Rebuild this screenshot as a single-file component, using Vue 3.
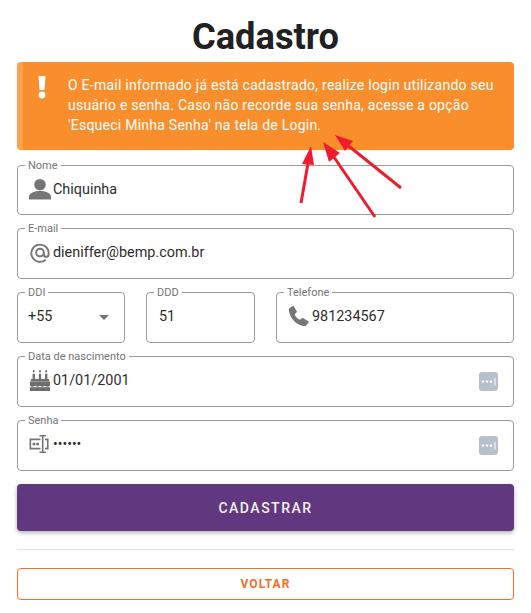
<script setup>
const arrows = [
  { x1: 301, y1: 203, x2: 310, y2: 152, head: '311,146 302,164 314,165' },
  { x1: 375, y1: 217, x2: 327, y2: 147, head: '323,142 329,162 340,153' },
  { x1: 401, y1: 188, x2: 340, y2: 139, head: '335,135 345,151 353,141' }
]
</script>

<template>
  <main class="page">
    <h1 class="title">Cadastro</h1>
    <div class="alert">
      <svg class="alert-icon" width="10" height="24" viewBox="0 0 10 24"><path d="M1.5 1h7l-1 14h-5z" fill="#fff"/><circle cx="5" cy="20" r="3.4" fill="#fff"/></svg>
      <p class="alert-text">O E-mail informado já está cadastrado, realize login utilizando seu usuário e senha. Caso não recorde sua senha, acesse a opção 'Esqueci Minha Senha' na tela de Login.</p>
    </div>

    <form class="form" @submit.prevent>
      <fieldset class="field first">
        <legend>Nome</legend>
        <div class="value">
          <svg class="icon" width="23" height="24" viewBox="0 0 24 24"><circle cx="12.5" cy="7.5" r="6" fill="#767676"/><path d="M1 23v-3c0-4 6-6 11.500-6S24 16 24 20v3z" fill="#767676"/></svg>
          <span>Chiquinha</span>
        </div>
      </fieldset>

      <fieldset class="field">
        <legend>E-mail</legend>
        <div class="value">
          <svg class="icon" width="23" height="23" viewBox="0 0 24 24" fill="none" stroke="#767676" stroke-width="2"><path d="M18.500 19.500a9 9 0 1 1 3-7v1.500a2.500 2.500 0 0 1-5 0V12"/><circle cx="12.500" cy="12" r="4"/></svg>
          <span>dieniffer@bemp.com.br</span>
        </div>
      </fieldset>

      <div class="row">
        <fieldset class="field ddi">
          <legend>DDI</legend>
          <div class="value select">
            <span>+55</span>
            <i class="caret"></i>
          </div>
        </fieldset>
        <fieldset class="field ddd">
          <legend>DDD</legend>
          <div class="value plain"><span>51</span></div>
        </fieldset>
        <fieldset class="field phone">
          <legend>Telefone</legend>
          <div class="value">
            <svg class="icon" width="23" height="24" viewBox="0 0 24 24"><path d="M2 4.500 6.500 1l4 6.500-2.500 3c1 2.500 3 4.500 5.500 5.500l2.800-2.300L23 18l-3.500 4.500C10 23 1.500 13 2 4.500z" fill="#767676"/></svg>
            <span>981234567</span>
          </div>
        </fieldset>
      </div>

      <fieldset class="field">
        <legend>Data de nascimento</legend>
        <div class="value">
          <svg class="icon" width="23" height="24" viewBox="0 0 24 24" fill="#6e6e6e"><path d="M6 1l1.200 2-1.200 1.500-1.200-1.500zM12.500 1l1.200 2-1.200 1.500-1.200-1.500zM19 1l1.200 2-1.200 1.500-1.200-1.500z"/><rect x="4.800" y="5.500" width="2.400" height="6"/><rect x="11.300" y="5.500" width="2.400" height="6"/><rect x="17.800" y="5.500" width="2.400" height="6"/><rect x="3" y="11" width="19" height="2.500"/><path d="M2 13.500h21v4.500c-2 1.500-4 1.500-5.250 0-1.500 1.500-3.750 1.500-5.250 0-1.500 1.500-3.750 1.500-5.250 0-1.250 1.500-3.250 1.500-5.250 0z"/><rect x="2" y="19.500" width="21" height="4"/></svg>
          <span>01/01/2001</span>
          <svg class="picker" width="19" height="19" viewBox="0 0 19 19"><rect width="19" height="19" rx="3" fill="#b9c0cd"/><g fill="#fff"><circle cx="4" cy="9.500" r="1.200"/><circle cx="8" cy="9.500" r="1.200"/><circle cx="12" cy="9.500" r="1.200"/><rect x="15.500" y="5.500" width="1" height="8"/></g></svg>
        </div>
      </fieldset>

      <fieldset class="field">
        <legend>Senha</legend>
        <div class="value">
          <svg class="icon" width="23" height="22" viewBox="0 0 24 24" fill="none" stroke="#767676" stroke-width="1.800"><path d="M13 7H2v10h11M18 7h3v10h-3"/><path d="M12 3h7M12 21h7M15.500 3v18"/><circle cx="6" cy="12" r=".8" fill="#767676"/><circle cx="10" cy="12" r=".8" fill="#767676"/></svg>
          <span class="dots">••••••</span>
          <svg class="picker" width="19" height="19" viewBox="0 0 19 19"><rect width="19" height="19" rx="3" fill="#b9c0cd"/><g fill="#fff"><circle cx="4" cy="9.500" r="1.200"/><circle cx="8" cy="9.500" r="1.200"/><circle cx="12" cy="9.500" r="1.200"/><rect x="15.500" y="5.500" width="1" height="8"/></g></svg>
        </div>
      </fieldset>

      <button class="submit" type="submit">CADASTRAR</button>
      <hr class="divider" />
      <button class="back" type="button">VOLTAR</button>
    </form>

    <svg class="arrows" width="531" height="613" viewBox="0 0 531 613">
      <g v-for="(a, i) in arrows" :key="i">
        <line :x1="a.x1" :y1="a.y1" :x2="a.x2" :y2="a.y2" stroke="#ed1c2e" stroke-width="3"/>
        <polygon :points="a.head" fill="#ed1c2e"/>
      </g>
    </svg>
  </main>
</template>

<style scoped>
.page {
  position: relative;
  box-sizing: border-box;
  width: 531px;
  height: 613px;
  padding: 0 17px;
  overflow: hidden;
  font-family: Roboto, sans-serif;
  color: #2b2b2b;
  background: #fff;
}
.title {
  margin: 0;
  height: 62px;
  padding-top: 15px;
  box-sizing: border-box;
  font-size: 36.300px;
  line-height: 44px;
  font-weight: 700;
  text-align: center;
  color: #212121;
}
.alert {
  display: flex;
  box-sizing: border-box;
  height: 88px;
  padding: 13px 16px 0 14px;
  gap: 21px;
  background: #f98e2d;
  border-left: 6px solid #fba04d;
  border-radius: 4px;
  color: #fff;
}
.alert-icon {
  flex: none;
}
.alert-text {
  margin: 0;
  font-size: 14px;
  line-height: 20px;
  letter-spacing: 0.250px;
}
.form {
  display: flex;
  flex-direction: column;
  gap: 7px;
  margin-top: 9px;
}
.field {
  box-sizing: border-box;
  height: 57px;
  margin: 0;
  padding: 0 15px 0 7px;
  min-width: 0;
  border: 1px solid #9b9b9b;
  border-radius: 4px;
}
.first {
  height: 56px;
}
.field legend {
  padding: 0 3px;
  font-size: 11px;
  line-height: 13px;
  color: #757575;
}
.value {
  display: flex;
  align-items: center;
  gap: 2px;
  height: 32px;
  margin-top: 1px;
  padding-left: 3px;
  font-size: 14.400px;
  color: #2e2e2e;
}
.icon {
  flex: none;
}
.picker {
  flex: none;
  margin-left: auto;
  margin-top: 3px;
}
.dots {
  font-size: 14px;
}
.row {
  display: flex;
  gap: 21px;
}
.ddi {
  width: 108px;
  flex: none;
}
.ddd {
  width: 109px;
  flex: none;
}
.phone {
  flex: 1;
  min-width: 0;
}
.select {
  justify-content: space-between;
  padding-right: 0;
}
.caret {
  width: 0;
  height: 0;
  margin-top: 3px;
  border-left: 5px solid transparent;
  border-right: 5px solid transparent;
  border-top: 5px solid #757575;
}
.plain {
  padding-left: 5px;
}
.submit {
  height: 47px;
  margin-top: 6px;
  border: 0;
  border-radius: 4px;
  background: #61387f;
  color: #f4f0f7;
  font-family: inherit;
  font-size: 14px;
  font-weight: 500;
  letter-spacing: 1.500px;
  box-shadow: 0 2px 4px rgba(0, 0, 0, 0.3);
}
.divider {
  width: 100%;
  height: 1px;
  margin: 11px 0;
  border: 0;
  background: #e0e0e0;
}
.back {
  height: 32px;
  border: 1px solid #f36f26;
  border-radius: 4px;
  background: #fff;
  color: #f36f26;
  font-family: inherit;
  font-size: 12px;
  font-weight: 700;
  letter-spacing: 1px;
}
.arrows {
  position: absolute;
  left: 0;
  top: 0;
  pointer-events: none;
}
</style>
